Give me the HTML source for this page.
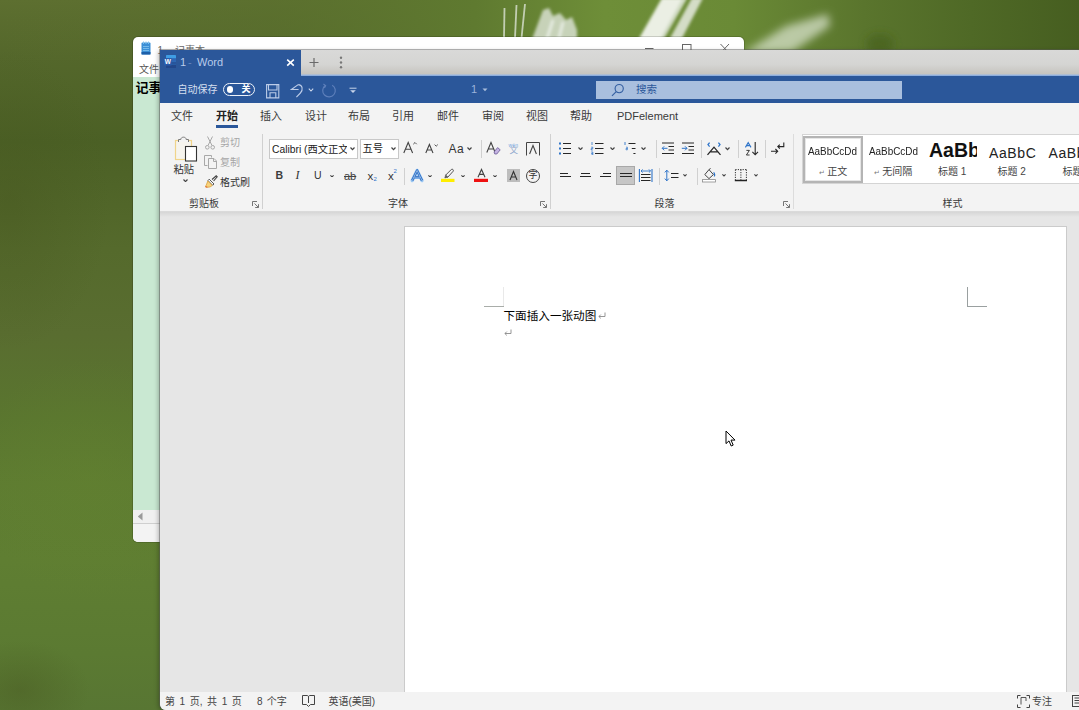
<!DOCTYPE html>
<html lang="zh-CN">
<head>
<meta charset="utf-8">
<title>1 - Word</title>
<style>
*{box-sizing:border-box;margin:0;padding:0}
html,body{width:1079px;height:710px;overflow:hidden}
body{position:relative;font-family:"Liberation Sans","Noto Sans CJK SC",sans-serif;font-size:11px;color:#333;
background:#56702a;}
.abs{position:absolute}
.t{position:absolute;white-space:nowrap;line-height:14px;height:14px}
#bg{position:absolute;left:0;top:0;width:1079px;height:710px}
/* notepad */
#np{position:absolute;left:133px;top:37px;width:611px;height:505px;background:#fff;border-radius:5px;overflow:hidden;box-shadow:0 0 0 1px rgba(0,0,0,.15)}
#ni{position:absolute;left:-133px;top:-37px;width:1079px;height:710px}
#np .body{position:absolute;left:133px;top:77px;width:611px;height:433px;background:#c9e8d2}
#np .sb{position:absolute;left:133px;top:510px;width:611px;height:14px;background:#f0f0f0;border-bottom:1px solid #cfcfcf}
#np .st{position:absolute;left:133px;top:524px;width:611px;height:18px;background:#f3f3f3}
/* word */
#wd{position:absolute;left:160px;top:50px;width:930px;height:660px;background:#e6e6e6;border-radius:0 0 0 6px;overflow:hidden;box-shadow:0 0 0 1px rgba(90,90,90,.45),-2px 1px 4px rgba(0,0,0,.25)}
#wi{position:absolute;left:-160px;top:-50px;width:1079px;height:710px}
#tabbar{position:absolute;left:160px;top:50px;width:930px;height:26px;background:linear-gradient(180deg,#d9d9d8,#d5d5d3 55%,#c6c4bf 92%,#9db9e2 96%,#7fa3d8)}
#tab{position:absolute;left:160px;top:50px;width:141px;height:27px;background:#2b579a}
#title{position:absolute;left:160px;top:76px;width:930px;height:27.500px;background:#2b579a}
#rtabs{position:absolute;left:160px;top:103px;width:930px;height:27px;background:#f3f3f3}
#ribbon{position:absolute;left:160px;top:130px;width:930px;height:82px;background:#f3f3f3;border-bottom:1px solid #dadada}
#doc{position:absolute;left:160px;top:212px;width:930px;height:480px;background:#e6e6e6}
#page{position:absolute;left:244.5px;top:15px;width:661px;height:470px;background:#fff;box-shadow:0 0 0 1px #cbcbcb}
#status{position:absolute;left:160px;top:692px;width:930px;height:30px;background:#f3f3f3}
.w{color:#fff}
.g{color:#a0a0a0}
.sep{position:absolute;width:1px;background:#d2d2d2}
</style>
</head>
<body>
<svg id="bg" width="1079" height="710" viewBox="0 0 1079 710">
<defs>
<linearGradient id="lg" x1="0" y1="0" x2="0" y2="1">
<stop offset="0" stop-color="#5d6f30"/><stop offset=".08" stop-color="#54672b"/><stop offset=".2" stop-color="#4b6025"/>
<stop offset=".35" stop-color="#556a2c"/><stop offset=".47" stop-color="#596d30"/><stop offset=".59" stop-color="#5a762f"/><stop offset=".68" stop-color="#5e7c31"/>
<stop offset=".79" stop-color="#5f7e32"/><stop offset=".92" stop-color="#5b7a32"/><stop offset="1" stop-color="#587633"/>
</linearGradient>
<linearGradient id="tg" x1="0" y1="0" x2="1" y2="0">
<stop offset="0" stop-color="#5d7030" stop-opacity="0"/><stop offset=".25" stop-color="#5a712d" stop-opacity=".5"/><stop offset=".44" stop-color="#5f7a30"/><stop offset=".56" stop-color="#6e8e38"/>
<stop offset=".68" stop-color="#6a8a36"/><stop offset=".8" stop-color="#5a752d"/><stop offset=".9" stop-color="#4f6926"/><stop offset="1" stop-color="#465e20"/>
</linearGradient>
<radialGradient id="rg1" cx=".5" cy=".5" r=".5"><stop offset="0" stop-color="#47561f" stop-opacity=".4"/><stop offset="1" stop-color="#47581f" stop-opacity="0"/></radialGradient>
<radialGradient id="rg2" cx=".5" cy=".5" r=".5"><stop offset="0" stop-color="#63832f" stop-opacity=".6"/><stop offset="1" stop-color="#63832f" stop-opacity="0"/></radialGradient>
<filter id="b2" x="-20%" y="-20%" width="140%" height="140%"><feGaussianBlur stdDeviation="1.6"/></filter>
<filter id="b4" x="-30%" y="-30%" width="160%" height="160%"><feGaussianBlur stdDeviation="4"/></filter>
<filter id="b1"><feGaussianBlur stdDeviation="0.7"/></filter>
</defs>
<rect width="1079" height="710" fill="url(#lg)"/>
<ellipse cx="10" cy="200" rx="100" ry="150" fill="url(#rg1)"/><ellipse cx="20" cy="690" rx="70" ry="50" fill="url(#rg1)"/>
<ellipse cx="90" cy="480" rx="120" ry="120" fill="url(#rg2)" opacity=".6"/>
<rect x="0" y="0" width="1079" height="60" fill="url(#tg)"/>
<g filter="url(#b1)" stroke="#d3dcc9" stroke-width="1.8" fill="none" opacity=".85">
<path d="M504 38 L504.500 8"/><path d="M515 38 L516.500 5"/><path d="M521.500 38 L525 4"/>
</g>
<g filter="url(#b2)">
<path d="M531 42 L543 10 L549 8 L553 16 L560 13 L566 20 L572 17 L577 30 L577 42 Z" fill="#e2e8de" opacity=".78"/>
<path d="M546 42 L553 20 M558 42 L563 22" stroke="#f4f6f2" stroke-width="3" opacity=".7" fill="none"/>
<path d="M637 42 L662 -2 L687 -2 L662 42 Z" fill="#f4f6f1" opacity=".93"/>
<path d="M668 42 L692 -2 L703 -2 L680 42 Z" fill="#e6ebe0" opacity=".85"/>
<path d="M660 42 L684 -2" stroke="#aebf98" stroke-width="2" opacity=".6" fill="none"/>
</g>
<g filter="url(#b4)">
<path d="M742 54 L786 26 L828 14 L830 26 L792 52 Z" fill="#dfe8d6" opacity=".7"/>
<ellipse cx="880" cy="44" rx="14" ry="10" fill="#46601f" opacity=".7"/>
</g>
</svg>

<div id="np"><div id="ni">
  <div class="body"></div>
  <div class="sb"></div>
  <div class="st"></div>
  <svg class="abs" style="left:141px;top:41px" width="10" height="14" viewBox="0 0 10 14"><rect x=".5" y="1.5" width="9" height="12" rx="1" fill="#3b8fd6"/><rect x=".5" y="11" width="9" height="2.5" fill="#1d5fa8"/><path d="M2.5 0.5 V3 M5 .5 V3 M7.5 .5 V3" stroke="#7fc0ee" stroke-width="1"/><path d="M2 5.5 H8 M2 7.5 H8 M2 9.5 H8" stroke="#8ecbf2" stroke-width=".7"/></svg>
  <div class="t" style="left:157.500px;top:43.500px;font-size:10px;color:#666">1</div>
  <div class="t" style="left:175px;top:43.500px;font-size:10px;color:#666">记事本</div>
  <div class="t" style="left:139px;top:63px;font-size:10px;color:#555">文件</div>
  <div class="t" style="left:135.5px;top:80px;font-size:13px;font-weight:bold;color:#000;line-height:16px;height:16px">记事本</div>
  <svg class="abs" style="left:644px;top:41px" width="90" height="14" viewBox="0 0 90 14" fill="none" stroke="#666" stroke-width="1"><path d="M1 7.500 H9.500"/><rect x="38.500" y="3.500" width="8.500" height="8.500"/><path d="M76.500 3 L85 12 M85 3 L76.500 12"/></svg>
  <svg class="abs" style="left:137px;top:512px" width="6" height="9" viewBox="0 0 6 9"><path d="M5.5 .5 L.8 4.5 L5.5 8.5 Z" fill="#9a9a9a"/></svg>
</div></div>

<div id="wd"><div id="wi">
  <div id="tabbar"></div>
  <div id="tab"></div>
  <div id="title"></div>
  <div id="rtabs"></div>
  <div id="ribbon"></div>
  <div id="doc"><div id="page"></div></div>
  <div id="status"></div>
<!--TABBAR-->
<svg class="abs" style="left:164px;top:55px" width="12" height="13" viewBox="0 0 12 13">
<rect x="2" y="0" width="10" height="13" rx=".8" fill="#3f9de4"/><rect x="2" y="3.200" width="10" height="3.300" fill="#2f66b4"/><rect x="2" y="6.500" width="10" height="3.300" fill="#27559c"/><rect x="2" y="9.800" width="10" height="3.200" fill="#22478a"/>
<rect x="0" y="3" width="7.500" height="7.500" rx=".6" fill="#2a5cab"/>
<text x="3.75" y="9" font-size="6.5" font-weight="bold" fill="#fff" text-anchor="middle" font-family="Liberation Sans, sans-serif">W</text></svg>
<div class="t" style="left:180px;top:55px;font-size:11px;color:#b9cbea">1</div><div class="t" style="left:188px;top:55px;font-size:11px;color:#6586c0">-</div><div class="t" style="left:197px;top:55px;font-size:11px;color:#b9cbea">Word</div>
<svg class="abs" style="left:286px;top:58px" width="9" height="9" viewBox="0 0 9 9"><path d="M1.200 1.600 L7.800 7.600 M7.800 1.600 L1.200 7.600" stroke="#fff" stroke-width="1.600" fill="none"/></svg>
<svg class="abs" style="left:309px;top:57px" width="10" height="11" viewBox="0 0 10 11"><path d="M5 1 V10 M0.5 5.5 H9.5" stroke="#6a6a6a" stroke-width="1.2" fill="none"/></svg>
<svg class="abs" style="left:339px;top:56px" width="4" height="13" viewBox="0 0 4 13"><circle cx="2" cy="1.8" r="1.2" fill="#777"/><circle cx="2" cy="6.5" r="1.2" fill="#777"/><circle cx="2" cy="11.2" r="1.2" fill="#777"/></svg>
<!--TITLE-->
<div class="t" style="left:177.500px;top:83px;font-size:10px;color:#d5dfef">自动保存</div>
<div class="abs" style="left:223px;top:83px;width:32px;height:13px;border:1.3px solid #eef2f9;border-radius:7px"></div>
<div class="abs" style="left:226.500px;top:86.300px;width:6.400px;height:6.400px;border-radius:4px;background:#fff"></div>
<div class="t" style="left:241.500px;top:83px;font-size:9px;color:#fff;line-height:13px;height:13px;font-weight:bold">关</div>
<svg class="abs" style="left:266px;top:83.500px" width="14" height="15" viewBox="0 0 14 15" fill="none" stroke="#bccce8" stroke-width="1.1"><path d="M.6 .6 H12.800 V13.900 H.6 Z"/><path d="M2.500 .6 V6 H11 V.6"/><path d="M4 13.900 V8.800 H9.800 V13.900"/></svg>
<svg class="abs" style="left:290px;top:83px" width="14" height="15" viewBox="0 0 14 15" fill="none" stroke="#bccce8" stroke-width="1.1"><path d="M8.200 1.600 C12.600 1.800 13.400 6.800 10.400 10 L6.400 14.200"/><path d="M8.200 1.600 L1.400 6.500 H8.600"/></svg>
<svg class="abs" style="left:307.500px;top:88px" width="6" height="4" viewBox="0 0 6 4"><path d="M.8 .6 L3 3 L5.200 .6" fill="none" stroke="#c9d5ea" stroke-width="1.100"/></svg>
<svg class="abs" style="left:321px;top:83px" width="16" height="16" viewBox="0 0 16 16" fill="none" stroke="#5d7fba" stroke-width="1.2"><path d="M4.200 2.600 A6.300 6.300 0 1 0 11.200 2.200"/><path d="M2.400 1 L4.600 2.600 L3.400 5"/></svg>
<svg class="abs" style="left:349px;top:87px" width="8" height="7" viewBox="0 0 8 7"><path d="M.5 1.200 H7.500" stroke="#c9d5ea" stroke-width="1"/><path d="M1.200 3.200 L4 6 L6.800 3.200 Z" fill="#c9d5ea"/></svg>
<div class="t" style="left:471px;top:82px;font-size:11px;color:#9cb3db">1</div>
<svg class="abs" style="left:482px;top:88px" width="6" height="4" viewBox="0 0 6 4"><path d="M.5 .5 L3 3.2 L5.5 .5 Z" fill="#a9bddc"/></svg>
<div class="abs" style="left:596px;top:81px;width:306px;height:17.5px;background:#a9bfde"></div>
<svg class="abs" style="left:611px;top:83px" width="14" height="14" viewBox="0 0 14 14" fill="none" stroke="#3560a2" stroke-width="1.150"><circle cx="8.2" cy="5.6" r="4.1"/><path d="M5.2 8.6 L1 12.8"/></svg>
<div class="t" style="left:636px;top:82px;font-size:10.5px;color:#2b579a">搜索</div>
<!--RTABS-->
<div class="t" style="left:171px;top:109px;font-size:11px;color:#3a3a3a">文件</div>
<div class="t" style="left:216px;top:109px;font-size:11px;color:#3a3a3a;font-weight:bold;color:#222">开始</div>
<div class="t" style="left:260px;top:109px;font-size:11px;color:#3a3a3a">插入</div>
<div class="t" style="left:305px;top:109px;font-size:11px;color:#3a3a3a">设计</div>
<div class="t" style="left:348px;top:109px;font-size:11px;color:#3a3a3a">布局</div>
<div class="t" style="left:392px;top:109px;font-size:11px;color:#3a3a3a">引用</div>
<div class="t" style="left:437px;top:109px;font-size:11px;color:#3a3a3a">邮件</div>
<div class="t" style="left:482px;top:109px;font-size:11px;color:#3a3a3a">审阅</div>
<div class="t" style="left:526px;top:109px;font-size:11px;color:#3a3a3a">视图</div>
<div class="t" style="left:570px;top:109px;font-size:11px;color:#3a3a3a">帮助</div>
<div class="t" style="left:617px;top:109px;font-size:11px;color:#3a3a3a">PDFelement</div>
<div class="abs" style="left:216px;top:125px;width:22px;height:3px;background:#2b579a"></div>
<!--RIBBON-->
<svg class="abs" style="left:174px;top:135px" width="24" height="27" viewBox="0 0 24 27" fill="none">
<rect x="1.500" y="5.500" width="16" height="19" stroke="#f0d48a" stroke-width="1.200" fill="#f6f4ee"/>
<path d="M4.500 7 V4.500 H6.800 C6.800 1.400 12.200 1.400 12.200 4.500 H14.500 V7" stroke="#7a7a7a" stroke-width="1" fill="#f3f3f3"/>
<rect x="11.500" y="11.500" width="11" height="14.500" stroke="#333" stroke-width="1.100" fill="#fff"/></svg>
<div class="t" style="left:173.5px;top:162.5px;font-size:10.3px;color:#333">粘贴</div>
<svg class="abs" style="left:182.500px;top:179.300px" width="5" height="3.200" viewBox="0 0 5 3.200"><path d="M.5 .5 L2.500 2.600 L4.500 .5" fill="none" stroke="#444" stroke-width="1.200"/></svg>
<svg class="abs" style="left:205px;top:136px" width="10" height="14" viewBox="0 0 10 14" fill="none" stroke="#a8a8a8" stroke-width="1"><path d="M2.5 .5 L7 9.5 M7.5 .5 L3 9.5"/><circle cx="2.3" cy="11.3" r="1.8"/><circle cx="7.7" cy="11.3" r="1.8"/></svg>
<div class="t" style="left:220px;top:136px;font-size:10px;color:#a6a6a6">剪切</div>
<svg class="abs" style="left:204px;top:155px" width="14" height="14" viewBox="0 0 14 14" fill="none" stroke="#a8a8a8" stroke-width="1"><path d="M3.5 10.5 H.5 V.5 H7.5 V2.5"/><path d="M4.5 3.5 H10 L12.5 6 V13.5 H4.5 Z"/><path d="M9.5 3.5 V6.5 H12.5"/></svg>
<div class="t" style="left:220px;top:155.5px;font-size:10px;color:#a6a6a6">复制</div>
<svg class="abs" style="left:204px;top:175px" width="14" height="14" viewBox="0 0 14 14" fill="none"><path d="M8 4.5 L12.2 .8 L13.2 1.8 L9.6 6" stroke="#444" stroke-width="1.1"/><path d="M5.2 4.2 L10 9 L8.6 10.2 L4 5.6 Z" fill="#fff" stroke="#444" stroke-width=".9"/><path d="M3.800 6 L8.200 10.400 C6.800 12.200 4 12.600 1.400 11.800 C2.600 10.200 2.800 8 3.800 6 Z" fill="#f8d27c" stroke="#d9a13a" stroke-width=".8"/><path d="M1.600 11.800 L3.400 12.200" stroke="#e0542a" stroke-width="1"/></svg>
<div class="t" style="left:220px;top:176px;font-size:10px;color:#333">格式刷</div>
<div class="t" style="left:189px;top:196.500px;font-size:10px;color:#383838">剪贴板</div>
<svg class="abs" style="left:252px;top:201px" width="7" height="7" viewBox="0 0 7 7" fill="none" stroke="#666" stroke-width=".9"><path d="M.5 5 V.5 H5"/><path d="M2.5 2.5 L6.3 6.3 M6.5 3.2 V6.5 H3.2"/></svg>
<div class="sep" style="left:261.5px;top:134px;height:75px;background:#d0d0d0"></div>
<div class="abs" style="left:268.5px;top:139px;width:89.5px;height:20px;background:#fff;border:1px solid #c8c8c8"></div>
<div class="abs" style="left:359.5px;top:139px;width:39px;height:20px;background:#fff;border:1px solid #c8c8c8"></div>
<div class="t" style="left:272px;top:142.5px;font-size:10.3px;color:#222;width:75px;overflow:hidden">Calibri (西文正文)</div>
<svg class="abs" style="left:350px;top:147.4px" width="5" height="3.200" viewBox="0 0 5 3.200"><path d="M.5 .5 L2.500 2.600 L4.500 .5" fill="none" stroke="#444" stroke-width="1.200"/></svg>
<div class="t" style="left:362.5px;top:142px;font-size:10.3px;color:#222">五号</div>
<svg class="abs" style="left:391px;top:147.4px" width="5" height="3.200" viewBox="0 0 5 3.200"><path d="M.5 .5 L2.500 2.600 L4.500 .5" fill="none" stroke="#444" stroke-width="1.200"/></svg>
<svg class="abs" style="left:403px;top:141px" width="15" height="13" viewBox="0 0 15 13" fill="none" stroke="#444" stroke-width="1.1"><path d="M.8 12 L5.2 1.5 L9.6 12 M2.4 8.3 H8"/><path d="M10.3 3.2 L12 1.5 L13.7 3.2" stroke-width=".9"/></svg>
<svg class="abs" style="left:425px;top:143px" width="14" height="11" viewBox="0 0 14 11" fill="none" stroke="#444" stroke-width="1.1"><path d="M.8 10 L4.4 1.5 L8 10 M2.2 7 H6.6"/><path d="M9.6 1.6 L11.2 3.2 L12.8 1.6" stroke-width=".9"/></svg>
<div class="t" style="left:448.5px;top:141.5px;font-size:12px;color:#333;letter-spacing:.5px">Aa</div>
<svg class="abs" style="left:467px;top:147.4px" width="5" height="3.200" viewBox="0 0 5 3.200"><path d="M.5 .5 L2.500 2.600 L4.500 .5" fill="none" stroke="#444" stroke-width="1.200"/></svg>
<div class="sep" style="left:480.5px;top:140px;height:18px;background:#d0d0d0"></div>
<svg class="abs" style="left:486px;top:141px" width="15" height="15" viewBox="0 0 15 15" fill="none"><path d="M.8 11.5 L5 1.5 L9.2 11.5 M2.3 8 H7.7" stroke="#444" stroke-width="1.1"/><path d="M8 11 L11.6 6.6 L14.2 8.8 L10.8 13 L8.8 13 Z" fill="#c5b4e3" stroke="#6b5b95" stroke-width=".8"/></svg>
<div class="t" style="left:508.500px;top:141.500px;font-size:5px;color:#6fa4e0;line-height:6px;height:6px;letter-spacing:.2px">wén</div>
<div class="t" style="left:509.500px;top:146px;font-size:8.500px;color:#8ea6cc;line-height:9px;height:9px">文</div>
<svg class="abs" style="left:526px;top:141.5px" width="14" height="14" viewBox="0 0 14 14" fill="none" stroke="#444"><path d="M.5 13.5 V.5 H13.5 V13.5" stroke-width="1"/><path d="M3.6 12 L7 3.5 L10.4 12" stroke-width="1.1"/></svg>
<div class="t" style="left:275.5px;top:167.5px;font-size:10.5px;color:#3c3c3c;font-weight:bold">B</div>
<div class="t" style="left:295.5px;top:167.5px;font-size:12px;color:#333;font-style:italic;font-family:'Liberation Serif',serif">I</div>
<div class="t" style="left:314px;top:167.5px;font-size:10.5px;color:#333">U</div>
<svg class="abs" style="left:330px;top:174.800px" width="4" height="2.400" viewBox="0 0 5 3"><path d="M.5 .4 L2.500 2.400 L4.500 .4" fill="none" stroke="#444" stroke-width="1.300"/></svg>
<div class="t" style="left:344px;top:168.5px;font-size:11px;color:#444;text-decoration:line-through">ab</div>
<div class="t" style="left:367.5px;top:168.5px;font-size:11.5px;color:#333">x</div>
<div class="t" style="left:373.5px;top:176px;font-size:6px;color:#2e74c9;line-height:7px;height:7px">2</div>
<div class="t" style="left:388px;top:168.5px;font-size:11.5px;color:#333">x</div>
<div class="t" style="left:393.5px;top:168px;font-size:6px;color:#2e74c9;line-height:7px;height:7px">2</div>
<div class="sep" style="left:403.5px;top:168px;height:17px;background:#d0d0d0"></div>
<svg class="abs" style="left:409px;top:167.500px" width="17" height="15" viewBox="0 0 17 15" fill="none"><path d="M3.200 12.600 L8.100 2.400 L13 12.600 M5.200 9.200 H11" stroke="#9cc8f3" stroke-width="3.400" stroke-linejoin="round" stroke-linecap="round"/><path d="M3.200 12.600 L8.100 2.400 L13 12.600 M5.200 9.200 H11" stroke="#2468c2" stroke-width="2.300" stroke-linejoin="round"/><path d="M3.200 12.600 L8.100 2.400 L13 12.600 M5.200 9.200 H11" stroke="#dcebfa" stroke-width=".6"/></svg>
<svg class="abs" style="left:427.5px;top:174.800px" width="4" height="2.400" viewBox="0 0 5 3"><path d="M.5 .4 L2.500 2.400 L4.500 .4" fill="none" stroke="#444" stroke-width="1.300"/></svg>
<svg class="abs" style="left:441px;top:167px" width="15" height="16" viewBox="0 0 15 16" fill="none"><path d="M4.600 8.200 L10.400 2.400 C11.400 1.600 13 3 12.200 4.200 L6.800 10.200 Z" stroke="#555" stroke-width="1" fill="#f3f3f3"/><path d="M4.600 8.200 L6.800 10.200 L3.800 11 Z" fill="#555" stroke="#555" stroke-width=".6"/><rect x="0" y="11.800" width="13.500" height="3.200" fill="#ffee00"/></svg>
<svg class="abs" style="left:460.5px;top:174.800px" width="4" height="2.400" viewBox="0 0 5 3"><path d="M.5 .4 L2.500 2.400 L4.500 .4" fill="none" stroke="#444" stroke-width="1.300"/></svg>
<svg class="abs" style="left:474px;top:167px" width="15" height="16" viewBox="0 0 15 16" fill="none"><path d="M4 10.200 L7.500 2.400 L11 10.200 M5.300 7.400 H9.700" stroke="#444" stroke-width="1.100"/><rect x="0" y="11.800" width="14" height="3.200" fill="#ee1111"/></svg>
<svg class="abs" style="left:493px;top:174.800px" width="4" height="2.400" viewBox="0 0 5 3"><path d="M.5 .4 L2.500 2.400 L4.500 .4" fill="none" stroke="#444" stroke-width="1.300"/></svg>
<svg class="abs" style="left:507px;top:169px" width="13" height="13" viewBox="0 0 13 13"><rect width="13" height="13" fill="#bdbdbd"/><path d="M3 11 L6.5 2.5 L10 11 M4.3 8 H8.7" stroke="#333" stroke-width="1.1" fill="none"/></svg>
<div class="abs" style="left:526px;top:168.5px;width:14px;height:14px;border:1px solid #444;border-radius:7px"></div>
<div class="t" style="left:528.5px;top:170px;font-size:9px;color:#333;line-height:11px;height:11px">字</div>
<div class="t" style="left:388px;top:196.500px;font-size:10px;color:#383838">字体</div>
<svg class="abs" style="left:540px;top:201px" width="7" height="7" viewBox="0 0 7 7" fill="none" stroke="#666" stroke-width=".9"><path d="M.5 5 V.5 H5"/><path d="M2.5 2.5 L6.3 6.3 M6.5 3.2 V6.5 H3.2"/></svg>
<div class="sep" style="left:549.5px;top:134px;height:75px;background:#d0d0d0"></div>
<svg class="abs" style="left:558px;top:141px" width="14" height="14" viewBox="0 0 14 14" fill="none" stroke="#262626" stroke-width="1"><path d="M5 2.500 H13 M5 7.500 H13 M5 12.500 H13"/><rect x="1" y="1.500" width="2" height="2" fill="#2e74c9" stroke="none"/><rect x="1" y="6.500" width="2" height="2" fill="#2e74c9" stroke="none"/><rect x="1" y="11.500" width="2" height="2" fill="#2e74c9" stroke="none"/></svg>
<svg class="abs" style="left:577.5px;top:147.2px" width="5" height="3.200" viewBox="0 0 5 3.200"><path d="M.5 .5 L2.500 2.600 L4.500 .5" fill="none" stroke="#444" stroke-width="1.200"/></svg>
<svg class="abs" style="left:590px;top:141px" width="14" height="14" viewBox="0 0 14 14" fill="none" stroke="#262626" stroke-width="1"><path d="M5 2.500 H13.500 M5 7.500 H13.500 M5 12.500 H13.500"/><path d="M2 1 V4 M1.200 6.200 H2.800 V7.600 H1.200 V9 H2.800 M1.200 11 H2.800 V14 H1.200 M1.200 12.500 H2.800" stroke="#2e74c9" stroke-width=".8"/></svg>
<svg class="abs" style="left:609.5px;top:147.2px" width="5" height="3.200" viewBox="0 0 5 3.200"><path d="M.5 .5 L2.500 2.600 L4.500 .5" fill="none" stroke="#444" stroke-width="1.200"/></svg>
<svg class="abs" style="left:623px;top:141px" width="14" height="14" viewBox="0 0 14 14" fill="none" stroke="#262626" stroke-width="1"><path d="M5.500 2.500 H12.500 M8.800 7.500 H12.500 M10.400 12.500 H12.500"/><path d="M2 1 V4" stroke="#2e74c9" stroke-width=".9"/><path d="M3 6.200 H4.400 V8.800 H3 V7.500 H4.400" stroke="#2e74c9" stroke-width=".7"/></svg>
<svg class="abs" style="left:641px;top:147.2px" width="5" height="3.200" viewBox="0 0 5 3.200"><path d="M.5 .5 L2.500 2.600 L4.500 .5" fill="none" stroke="#444" stroke-width="1.200"/></svg>
<div class="sep" style="left:655.5px;top:140px;height:18px;background:#d0d0d0"></div>
<svg class="abs" style="left:661px;top:141px" width="14" height="14" viewBox="0 0 14 14" fill="none" stroke="#262626" stroke-width="1"><path d="M1 2 H13 M7.500 5.500 H13 M7.500 9 H13 M1 12.500 H13"/><path d="M6.500 7.300 H1.200 M3.200 5.300 L1.200 7.300 L3.200 9.300" stroke="#2e74c9" stroke-width="1"/></svg>
<svg class="abs" style="left:681px;top:141px" width="14" height="14" viewBox="0 0 14 14" fill="none" stroke="#262626" stroke-width="1"><path d="M1 2 H13 M7.500 5.500 H13 M7.500 9 H13 M1 12.500 H13"/><path d="M.8 7.300 H6 M4 5.300 L6 7.300 L4 9.300" stroke="#2e74c9" stroke-width="1"/></svg>
<div class="sep" style="left:701px;top:140px;height:18px;background:#d0d0d0"></div>
<svg class="abs" style="left:706px;top:141px" width="16" height="15" viewBox="0 0 16 15" fill="none" stroke="#262626" stroke-width="1"><path d="M1.500 13.800 L8 6.200 L14.500 13.800 M4.200 10.800 H11.800" stroke-width="1.300"/><path d="M3.600 1.600 L2 3.600 L3.600 5.600 M12.400 1.600 L14 3.600 L12.400 5.600" stroke="#2e74c9" stroke-width="1.300"/></svg>
<svg class="abs" style="left:724.5px;top:147.4px" width="5" height="3.200" viewBox="0 0 5 3.200"><path d="M.5 .5 L2.500 2.600 L4.500 .5" fill="none" stroke="#444" stroke-width="1.200"/></svg>
<div class="sep" style="left:738px;top:140px;height:18px;background:#d0d0d0"></div>
<svg class="abs" style="left:744px;top:141px" width="15" height="15" viewBox="0 0 15 15" fill="none" stroke="#262626" stroke-width="1"><path d="M1.400 6.400 L4.200 1.600 L7 6.400 M2.600 4.600 H5.800" stroke="#2e74c9" stroke-width="1.100"/><path d="M2.400 9.400 H5.400 L2.400 14 H5.600" stroke-width=".9"/><path d="M11.200 1 V13.600 M8.400 10.800 L11.200 13.800 L14 10.800" stroke-width="1.100"/></svg>
<div class="sep" style="left:764.5px;top:140px;height:18px;background:#d0d0d0"></div>
<svg class="abs" style="left:770px;top:141px" width="16" height="15" viewBox="0 0 16 15" fill="none" stroke="#262626" stroke-width="1"><path d="M13.800 1.600 V5.600 H8 M9.800 3.600 L7.800 5.600 L9.800 7.600" stroke-width="1.100"/><path d="M1 10.300 H7.600 M5.400 8 L7.700 10.300 L5.400 12.600" stroke-width="1.100"/></svg>
<svg class="abs" style="left:560px;top:171px" width="13" height="9" viewBox="0 0 13 9" fill="none" stroke="#262626" stroke-width="1"><path d="M0 2.500 H8 M0 5.500 H11"/></svg>
<svg class="abs" style="left:580px;top:171px" width="13" height="9" viewBox="0 0 13 9" fill="none" stroke="#262626" stroke-width="1"><path d="M1 2.500 H10 M0 5.500 H11"/></svg>
<svg class="abs" style="left:600px;top:171px" width="13" height="9" viewBox="0 0 13 9" fill="none" stroke="#262626" stroke-width="1"><path d="M3 2.500 H11 M0 5.500 H11"/></svg>
<div class="abs" style="left:615.5px;top:166px;width:19.5px;height:19px;background:#c6c6c6;border:1px solid #a8a8a8"></div>
<svg class="abs" style="left:619.5px;top:171px" width="13" height="9" viewBox="0 0 13 9" fill="none" stroke="#262626" stroke-width="1"><path d="M0 2.500 H12 M0 5.500 H12"/></svg>
<svg class="abs" style="left:638px;top:168px" width="15" height="15" viewBox="0 0 15 15" fill="none" stroke="#262626" stroke-width="1"><path d="M3 6.500 H12.500 M3 9.500 H12.500 M3 12.500 H12.500"/><path d="M1.400 1 V14 M14 1 V14" stroke="#2e74c9" stroke-width="1.100"/><path d="M3 3 H12.500 M4.600 1.400 L3 3 L4.600 4.600 M10.900 1.400 L12.500 3 L10.900 4.600" stroke="#2e74c9" stroke-width=".9"/></svg>
<div class="sep" style="left:659px;top:168px;height:17px;background:#d0d0d0"></div>
<svg class="abs" style="left:663px;top:168px" width="16" height="15" viewBox="0 0 16 15" fill="none" stroke="#262626" stroke-width="1"><path d="M8 5.500 H15.500 M8 9.500 H15.500" stroke-width="1.100"/><path d="M3.800 2.200 V12.800 M1.800 4.400 L3.800 2.200 L5.800 4.400 M1.800 10.600 L3.800 12.800 L5.800 10.600" stroke="#2e74c9" stroke-width="1"/></svg>
<svg class="abs" style="left:682.6px;top:174.4px" width="4" height="2.400" viewBox="0 0 5 3"><path d="M.5 .4 L2.500 2.400 L4.500 .4" fill="none" stroke="#444" stroke-width="1.300"/></svg>
<div class="sep" style="left:696.5px;top:168px;height:17px;background:#d0d0d0"></div>
<svg class="abs" style="left:702px;top:168px" width="15" height="15" viewBox="0 0 15 15" fill="none" stroke="#262626" stroke-width="1"><path d="M2.800 6.600 L7 1.600 L11.400 6.600 L7 10.600 Z" stroke-width="1" stroke="#444"/><path d="M7 1.600 L8.600 .4" stroke="#444"/><path d="M11.600 4.400 C13 6 13 7.600 12 8.400" stroke="#2e74c9" stroke-width="1.200"/><rect x=".5" y="11.600" width="13" height="2.400" fill="#fff" stroke="#8a8a8a" stroke-width=".8"/></svg>
<svg class="abs" style="left:721.6px;top:174.4px" width="4" height="2.400" viewBox="0 0 5 3"><path d="M.5 .4 L2.500 2.400 L4.500 .4" fill="none" stroke="#444" stroke-width="1.300"/></svg>
<svg class="abs" style="left:734px;top:168px" width="14" height="14" viewBox="0 0 14 14" fill="none" stroke="#262626" stroke-width="1"><path d="M1.400 1.600 H12.400 M1.400 1.600 V12 M12.400 1.600 V12 M6.900 1.600 V12" stroke-dasharray="1.200 1.200" stroke-width="1" stroke="#333"/><path d="M.8 12.400 H13" stroke-width="1.500" stroke="#222"/></svg>
<svg class="abs" style="left:754.3px;top:174.4px" width="4" height="2.400" viewBox="0 0 5 3"><path d="M.5 .4 L2.500 2.400 L4.500 .4" fill="none" stroke="#444" stroke-width="1.300"/></svg>
<div class="t" style="left:654.5px;top:196.500px;font-size:10px;color:#383838">段落</div>
<svg class="abs" style="left:783px;top:201px" width="7" height="7" viewBox="0 0 7 7" fill="none" stroke="#666" stroke-width=".9"><path d="M.5 5 V.5 H5"/><path d="M2.5 2.5 L6.3 6.3 M6.5 3.2 V6.5 H3.2"/></svg>
<div class="sep" style="left:792.5px;top:134px;height:75px;background:#dcdcdc"></div>
<div class="abs" style="left:801.5px;top:134px;width:290px;height:50px;background:#fff;border:1px solid #d4d4d4"></div>
<div class="abs" style="left:803px;top:135.5px;width:59.5px;height:47px;border:2px solid #b4b4b4;box-shadow:inset 0 0 0 1px #e6e6e6"></div>
<div class="t" style="left:807.500px;top:144px;font-size:11px;color:#222;transform:scaleX(.9);transform-origin:0 50%">AaBbCcDd</div>
<div class="t" style="left:818.5px;top:164.5px;font-size:10px;color:#444"><span style="font-size:7px;color:#777">↵</span> 正文</div>
<div class="t" style="left:868.500px;top:144px;font-size:11px;color:#222;transform:scaleX(.9);transform-origin:0 50%">AaBbCcDd</div>
<div class="t" style="left:873.5px;top:164.5px;font-size:10px;color:#444"><span style="font-size:7px;color:#777">↵</span> 无间隔</div>
<div class="abs" style="left:923px;top:136px;width:53.500px;height:30px;overflow:hidden"><div class="t" style="left:6px;top:2px;font-size:19.500px;font-weight:bold;color:#111;line-height:24px;height:24px">AaBb(</div></div>
<div class="t" style="left:938px;top:164.5px;font-size:10px;color:#444">标题 1</div>
<div class="t" style="left:989px;top:145.500px;font-size:14px;color:#222;letter-spacing:.6px">AaBbC</div>
<div class="t" style="left:997.5px;top:164.5px;font-size:10px;color:#444">标题 2</div>
<div class="t" style="left:1048.500px;top:145.500px;font-size:14px;color:#222;letter-spacing:.6px">AaBbC</div>
<div class="t" style="left:1062.5px;top:164.5px;font-size:10px;color:#444">标题</div>
<div class="t" style="left:942.5px;top:196.500px;font-size:10px;color:#383838">样式</div>
<!--DOC-->
<div class="abs" style="left:160px;top:212px;width:930px;height:5px;background:linear-gradient(180deg,#d6d6d6,#e6e6e6)"></div>
<div class="abs" style="left:484px;top:305.500px;width:19.500px;height:1px;background:#a9ada9"></div>
<div class="abs" style="left:503px;top:287px;width:1px;height:19px;background:#e9e9e9"></div>
<div class="abs" style="left:967px;top:287px;width:1px;height:19.5px;background:#9aa0a0"></div>
<div class="abs" style="left:967px;top:305.5px;width:20px;height:1px;background:#9aa0a0"></div>
<div class="t" style="left:503.500px;top:308px;font-size:11.600px;color:#000;line-height:16px;height:16px;font-family:'Liberation Sans','Noto Sans CJK SC',sans-serif">下面插入一张动图</div>
<svg class="abs" style="left:597.800px;top:312.200px" width="8" height="7" viewBox="0 0 8 7" fill="none" stroke="#8a8a8a" stroke-width=".9"><path d="M7 .5 V4.5 H1 M2.8 2.6 L.9 4.5 L2.8 6.4"/></svg>
<svg class="abs" style="left:503.800px;top:329px" width="8" height="7" viewBox="0 0 8 7" fill="none" stroke="#8a8a8a" stroke-width=".9"><path d="M7 .5 V4.5 H1 M2.8 2.6 L.9 4.5 L2.8 6.4"/></svg>
<svg class="abs" style="left:724.5px;top:429.5px" width="12" height="18" viewBox="0 0 12 18"><path d="M1 1 V13.6 L4 10.9 L6.2 16 L8.2 15.1 L6 10.1 H10 Z" fill="#fff" stroke="#000" stroke-width="1"/></svg>
<!--STATUS-->
<div class="t" style="left:165px;top:695px;font-size:10px;color:#444;word-spacing:1.8px">第 1 页, 共 1 页</div>
<div class="t" style="left:257px;top:695px;font-size:10px;color:#444;word-spacing:1.5px">8 个字</div>
<svg class="abs" style="left:302px;top:695px" width="13" height="12" viewBox="0 0 13 12" fill="none" stroke="#444" stroke-width="1"><path d="M.5 9.5 V.5 H5 C6 .5 6.5 1.2 6.5 2 C6.5 1.2 7 .5 8 .5 H12.500 V9.5 H8.500 L6.500 11.500 L4.500 9.500 Z"/><path d="M6.5 2 V8"/></svg>
<div class="t" style="left:328.5px;top:695px;font-size:10px;color:#444">英语(美国)</div>
<svg class="abs" style="left:1017px;top:694.5px" width="13" height="13" viewBox="0 0 13 13" fill="none" stroke="#444" stroke-width="1"><path d="M3.500 .5 H.5 V3.500 M9.500 .5 H12.500 V3.500 M.5 9.500 V12.500 H3.500 M12.500 9.500 V12.500 H9.500"/><path d="M4 9.500 V2.500 H9 V6" stroke-width=".9"/></svg>
<div class="t" style="left:1032px;top:695px;font-size:10px;color:#444">专注</div>
<svg class="abs" style="left:1072px;top:695px" width="10" height="12" viewBox="0 0 10 12" fill="none" stroke="#444" stroke-width="1"><rect x=".5" y=".5" width="9" height="11"/><path d="M2.500 3 H7.500 M2.500 5.500 H7.500 M2.500 8 H7.500"/></svg>
</div></div>
</body>
</html>
